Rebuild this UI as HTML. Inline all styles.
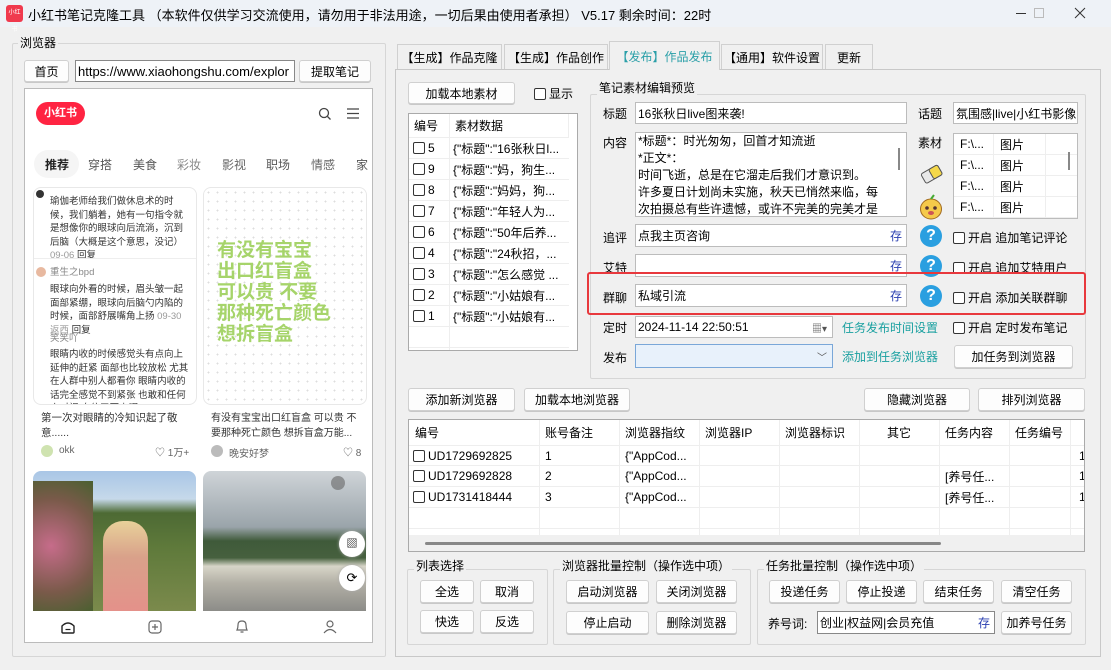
<!DOCTYPE html>
<html><head><meta charset="utf-8">
<style>
*{box-sizing:border-box;margin:0;padding:0}
body{width:1111px;height:670px;overflow:hidden;background:#f0f0f0;font-family:"Liberation Sans","Noto Sans CJK SC",sans-serif;font-size:12px;color:#000;position:relative}
.a{position:absolute}
.btn{position:absolute;background:#fdfdfd;border:1px solid #d0d0d0;border-radius:3px;text-align:center;font-size:12px;display:flex;align-items:center;justify-content:center;box-shadow:0 1px 0 #c8c8c8}
.inp{position:absolute;background:#fff;border:1px solid #bcbcbc;padding-left:2px;display:flex;align-items:center;font-size:12px;white-space:nowrap;overflow:hidden}
.grp{position:absolute;border:1px solid #d6d6d6;border-radius:2px}
.glab{position:absolute;background:#f0f0f0;padding:0 2px;font-size:12px;line-height:14px}
.cb{display:inline-block;width:12px;height:12px;border:1px solid #333;border-radius:2px;background:#fff;vertical-align:-2px;margin-right:3px}
.lbl{position:absolute;font-size:12px}
.q{position:absolute;width:22px;height:22px;border-radius:50%;background:#2a9fe0;color:#fff;font-weight:bold;font-size:16px;text-align:center;line-height:22px;font-family:"Liberation Sans",sans-serif}
.cun{position:absolute;right:4px;color:#2a3fb0;font-size:12px}
.tab{position:absolute;top:44px;height:25px;border:1px solid #d0d0d0;border-bottom:none;background:#f0f0f0;display:flex;align-items:center;justify-content:center;font-size:12px}
.row{position:absolute;left:0;right:0;height:21px;border-bottom:1px solid #eee;display:flex;align-items:center;font-size:12px;white-space:nowrap}
.link{position:absolute;color:#1aa0a0;font-size:12px}
.cm{position:absolute;left:16px;width:142px;font-size:9.5px;line-height:13.5px;color:#333}
</style></head><body>
<!-- title bar -->
<div class="a" style="left:0;top:0;width:1111px;height:27px;background:#eef2f7"></div>
<div class="a" style="left:6px;top:5px;width:17px;height:17px;border-radius:3px;background:#f03a4e;color:#fff;font-size:6px;line-height:17px;text-align:center">小红书</div>
<div class="a" style="left:28px;top:5px;font-size:13px;white-space:nowrap">小红书笔记克隆工具 （本软件仅供学习交流使用，请勿用于非法用途，一切后果由使用者承担） V5.17 剩余时间：22时</div>
<svg class="a" style="left:1015px;top:6px" width="80" height="16"><path d="M1 7.5h10" stroke="#333" stroke-width="1"/><rect x="19.5" y="2.5" width="9" height="9" fill="none" stroke="#bbb"/><path d="M60 2l10 10M70 2l-10 10" stroke="#333" stroke-width="1"/></svg>

<!-- left browser group -->
<div class="grp" style="left:12px;top:43px;width:374px;height:614px"></div>
<div class="glab" style="left:18px;top:36px">浏览器</div>
<div class="btn" style="left:24px;top:60px;width:45px;height:22px">首页</div>
<div class="inp" style="left:75px;top:60px;width:220px;height:22px;font-size:13px;border-color:#888">https://www.xiaohongshu.com/explor</div>
<div class="btn" style="left:299px;top:60px;width:72px;height:22px">提取笔记</div>
<div class="a" style="left:24px;top:88px;width:349px;height:555px;background:#fff;border:1px solid #bbb;overflow:hidden">
  <div class="a" style="left:11px;top:13px;width:49px;height:23px;border-radius:12px;background:#ff2442;color:#fff;font-weight:bold;font-size:11px;text-align:center;line-height:23px">小红书</div>
  <svg class="a" style="left:293px;top:18px" width="14" height="14" viewBox="0 0 14 14"><circle cx="6" cy="6" r="4.5" fill="none" stroke="#444" stroke-width="1.3"/><path d="M9.5 9.5 L12.5 12.5" stroke="#444" stroke-width="1.3"/></svg>
  <svg class="a" style="left:322px;top:19px" width="12" height="11"><path d="M0 1h12M0 5.5h12M0 10h12" stroke="#444" stroke-width="1.3"/></svg>
  <div class="a" style="left:9px;top:61px;width:45px;height:28px;border-radius:14px;background:#f5f5f5"></div>
  <div class="a" style="left:20px;top:67px;font-size:12px;font-weight:bold;color:#222">推荐</div>
  <div class="a" style="left:63px;top:67px;font-size:12px;color:#555">穿搭</div>
  <div class="a" style="left:108px;top:67px;font-size:12px;color:#555">美食</div>
  <div class="a" style="left:152px;top:67px;font-size:12px;color:#888">彩妆</div>
  <div class="a" style="left:197px;top:67px;font-size:12px;color:#666">影视</div>
  <div class="a" style="left:241px;top:67px;font-size:12px;color:#555">职场</div>
  <div class="a" style="left:286px;top:67px;font-size:12px;color:#666">情感</div>
  <div class="a" style="left:331px;top:67px;font-size:12px;color:#555">家</div>
  <!-- left card -->
  <div class="a" style="left:8px;top:98px;width:164px;height:218px;border:1px solid #e8e8e8;border-radius:8px;overflow:hidden">
    <div class="a" style="left:2px;top:2px;width:8px;height:8px;border-radius:50%;background:#333"></div>
    <div class="cm" style="top:7px">瑜伽老师给我们做休息术的时候，我们躺着，她有一句指令就是想像你的眼球向后流淌，沉到后脑（大概是这个意思，没记）<span style="color:#999">09-06</span> 回复</div>
    <div class="a" style="left:0;top:70px;width:164px;border-top:1px solid #eee"></div>
    <div class="a" style="left:2px;top:79px;width:10px;height:10px;border-radius:50%;background:#e8b9a0"></div>
    <div class="cm" style="top:78px;color:#888">重生之bpd</div>
    <div class="cm" style="top:95px">眼球向外看的时候，眉头皱一起面部紧绷，眼球向后脑勺内陷的时候，面部舒展嘴角上扬 <span style="color:#999">09-30 返西</span> 回复</div>
    <div class="cm" style="top:144px;color:#888">笑笑吖</div>
    <div class="cm" style="top:160px">眼睛内收的时候感觉头有点向上延伸的赶紧 面部也比较放松 尤其在人群中别人都看你 眼睛内收的话完全感觉不到紧张 也敢和任何人对视 自信了不少呢</div>
  </div>
  <div class="a" style="left:16px;top:322px;width:150px;font-size:10.5px;line-height:15px;color:#333">第一次对眼睛的冷知识起了敬意......</div>
  <div class="a" style="left:16px;top:356px;width:12px;height:12px;border-radius:50%;background:#cfe3b0"></div>
  <div class="a" style="left:34px;top:356px;font-size:10px;color:#666">okk</div>
  <div class="a" style="left:130px;top:355px;font-size:10px;color:#666">♡ 1万+</div>
  <!-- right card -->
  <div class="a" style="left:178px;top:98px;width:164px;height:218px;border:1px solid #e8e8e8;border-radius:8px;background-color:#fff;background-image:radial-gradient(#ddd 0.8px,transparent 0.9px);background-size:9px 9px">
    <div class="a" style="left:13px;top:52px;font-weight:bold;font-size:19px;line-height:21px;color:#a6d46a;width:150px">有没有宝宝<br>出口红盲盒<br>可以贵 不要<br>那种死亡颜色<br>想拆盲盒</div>
  </div>
  <div class="a" style="left:186px;top:322px;width:160px;font-size:10px;line-height:15px;color:#333;white-space:nowrap">有没有宝宝出口红盲盒 可以贵 不<br>要那种死亡颜色 想拆盲盒万能...</div>
  <div class="a" style="left:186px;top:356px;width:12px;height:12px;border-radius:50%;background:#bbb"></div>
  <div class="a" style="left:204px;top:356px;font-size:10px;color:#666">晚安好梦</div>
  <div class="a" style="left:318px;top:355px;font-size:10px;color:#666">♡ 8</div>
  <!-- images -->
  <div class="a" style="left:8px;top:382px;width:163px;height:140px;border-radius:8px 8px 0 0;overflow:hidden;background:linear-gradient(180deg,#a9c6e6 0%,#c6d9ea 20%,#4d6a34 30%,#5f7a3b 55%,#7b8a4c 100%)">
    <div class="a" style="left:0;top:10px;width:60px;height:130px;background:radial-gradient(circle at 30% 50%,#c66c8a,#7a5a4a 60%,#4a6030)"></div>
    <div class="a" style="left:70px;top:50px;width:45px;height:90px;border-radius:20px 20px 0 0;background:linear-gradient(180deg,#e8d19a,#d9a18a 40%,#e4918a)"></div>
  </div>
  <div class="a" style="left:178px;top:382px;width:163px;height:140px;border-radius:8px 8px 0 0;overflow:hidden;background:linear-gradient(180deg,#cfd4d8 0%,#9aa4aa 40%,#3f5a3a 50%,#46603e 62%,#d7d5c8 68%,#b3b0a6 80%,#8c8c88 100%)">
    <div class="a" style="left:128px;top:5px;width:14px;height:14px;border-radius:50%;background:#666;opacity:.6"></div>
  </div>
  <div class="a" style="left:314px;top:442px;width:26px;height:26px;border-radius:50%;background:#fff;box-shadow:0 0 3px #aaa;text-align:center;line-height:26px;font-size:11px">▨</div>
  <div class="a" style="left:314px;top:476px;width:26px;height:26px;border-radius:50%;background:#fff;box-shadow:0 0 3px #aaa;text-align:center;line-height:26px;font-size:13px">⟳</div>
  <!-- nav -->
  <svg class="a" style="left:36px;top:531px" width="14" height="14"><path d="M1 6 Q7 0 13 6 V12 Q13 13 12 13 H2 Q1 13 1 12Z" fill="none" stroke="#222" stroke-width="1.4"/><path d="M4.5 9.5h5" stroke="#222" stroke-width="1.2"/></svg>
  <svg class="a" style="left:123px;top:531px" width="14" height="14"><rect x="1" y="1" width="12" height="12" rx="3" fill="none" stroke="#666" stroke-width="1.2"/><path d="M7 4v6M4 7h6" stroke="#666" stroke-width="1.2"/></svg>
  <svg class="a" style="left:210px;top:530px" width="14" height="15"><path d="M2 11 Q3 9 3 6 Q3 2 7 2 Q11 2 11 6 Q11 9 12 11Z M5.5 13h3" fill="none" stroke="#666" stroke-width="1.2"/></svg>
  <svg class="a" style="left:298px;top:530px" width="14" height="15"><circle cx="7" cy="5" r="3" fill="none" stroke="#666" stroke-width="1.2"/><path d="M1 14 Q7 7 13 14" fill="none" stroke="#666" stroke-width="1.2"/></svg>
</div>

<!-- right panel -->
<div class="a" style="left:395px;top:69px;width:706px;height:588px;border:1px solid #c8c8c8;background:#f0f0f0"></div>
<div class="tab" style="left:397px;width:105px">【生成】作品克隆</div>
<div class="tab" style="left:504px;width:104px">【生成】作品创作</div>
<div class="tab" style="left:609px;top:41px;height:29px;width:111px;background:#f0f0f0;color:#2a9fa8;z-index:2">【发布】作品发布</div>
<div class="tab" style="left:721px;width:102px">【通用】软件设置</div>
<div class="tab" style="left:825px;width:48px">更新</div>

<div class="btn" style="left:408px;top:82px;width:107px;height:22px">加载本地素材</div>
<div class="lbl" style="left:534px;top:85px"><span class="cb"></span>显示</div>
<!-- material table -->
<div class="a" style="left:408px;top:113px;width:170px;height:238px;background:#fff;border:1px solid #aaa;overflow:hidden">
  <div class="a" style="left:0;top:0;width:160px;height:24px;display:flex;align-items:center;border-bottom:1px solid #eee"><span style="width:40px;padding-left:5px">编号</span><span style="padding-left:6px">素材数据</span></div>
  <div class="a" style="left:40px;top:0;width:1px;height:238px;background:#eee"></div>
  <div class="a" style="left:159px;top:0;width:1px;height:24px;background:#eee"></div>
  <div class="a" style="left:0;top:24px;width:160px;height:214px">
    <div class="row" style="top:0"><span style="width:40px;padding-left:4px"><span class="cb"></span>5</span><span style="padding-left:4px">{"标题":"16张秋日l...</span></div>
    <div class="row" style="top:21px"><span style="width:40px;padding-left:4px"><span class="cb"></span>9</span><span style="padding-left:4px">{"标题":"妈，狗生...</span></div>
    <div class="row" style="top:42px"><span style="width:40px;padding-left:4px"><span class="cb"></span>8</span><span style="padding-left:4px">{"标题":"妈妈，狗...</span></div>
    <div class="row" style="top:63px"><span style="width:40px;padding-left:4px"><span class="cb"></span>7</span><span style="padding-left:4px">{"标题":"年轻人为...</span></div>
    <div class="row" style="top:84px"><span style="width:40px;padding-left:4px"><span class="cb"></span>6</span><span style="padding-left:4px">{"标题":"50年后养...</span></div>
    <div class="row" style="top:105px"><span style="width:40px;padding-left:4px"><span class="cb"></span>4</span><span style="padding-left:4px">{"标题":"24秋招，...</span></div>
    <div class="row" style="top:126px"><span style="width:40px;padding-left:4px"><span class="cb"></span>3</span><span style="padding-left:4px">{"标题":"怎么感觉 ...</span></div>
    <div class="row" style="top:147px"><span style="width:40px;padding-left:4px"><span class="cb"></span>2</span><span style="padding-left:4px">{"标题":"小姑娘有...</span></div>
    <div class="row" style="top:168px"><span style="width:40px;padding-left:4px"><span class="cb"></span>1</span><span style="padding-left:4px">{"标题":"小姑娘有...</span></div>
    <div class="row" style="top:189px"></div>
  </div>
</div>

<div class="grp" style="left:590px;top:94px;width:496px;height:285px"></div>
<div class="glab" style="left:597px;top:81px">笔记素材编辑预览</div>
<div class="lbl" style="left:603px;top:105px">标题</div>
<div class="inp" style="left:635px;top:102px;width:272px;height:22px">16张秋日live图来袭!</div>
<div class="lbl" style="left:918px;top:105px">话题</div>
<div class="inp" style="left:953px;top:102px;width:125px;height:22px">氛围感|live|小红书影像</div>
<div class="lbl" style="left:603px;top:134px">内容</div>
<div class="a" style="left:635px;top:132px;width:272px;height:85px;background:#fff;border:1px solid #bcbcbc;padding:0 0 0 2px;line-height:17px;font-size:12px;overflow:hidden;white-space:nowrap">*标题*：时光匆匆，回首才知流逝<br>*正文*：<br>时间飞逝，总是在它溜走后我们才意识到。<br>许多夏日计划尚未实施，秋天已悄然来临，每<br>次拍摄总有些许遗憾，或许不完美的完美才是</div>
<div class="a" style="left:898px;top:148px;width:2px;height:22px;background:#888"></div>
<div class="lbl" style="left:918px;top:134px">素材</div>
<div class="a" style="left:953px;top:133px;width:125px;height:86px;background:#fff;border:1px solid #bcbcbc;overflow:hidden">
  <div class="row" style="top:0"><span style="width:40px;padding-left:6px">F:\...</span><span style="padding-left:6px">图片</span></div>
  <div class="row" style="top:21px"><span style="width:40px;padding-left:6px">F:\...</span><span style="padding-left:6px">图片</span></div>
  <div class="row" style="top:42px"><span style="width:40px;padding-left:6px">F:\...</span><span style="padding-left:6px">图片</span></div>
  <div class="row" style="top:63px"><span style="width:40px;padding-left:6px">F:\...</span><span style="padding-left:6px">图片</span></div>
  <div class="a" style="left:39px;top:0;width:1px;height:86px;background:#eee"></div>
  <div class="a" style="left:91px;top:0;width:1px;height:86px;background:#eee"></div>
  <div class="a" style="left:114px;top:18px;width:2px;height:18px;background:#888"></div>
</div>
<svg class="a" style="left:919px;top:163px" width="25" height="22"><g transform="rotate(-30 12 11)"><rect x="3" y="6" width="19" height="11" rx="2" fill="#e8e8e8" stroke="#555"/><rect x="12" y="6" width="10" height="11" rx="2" fill="#f5d84a" stroke="#555"/></g></svg>
<svg class="a" style="left:919px;top:193px" width="25" height="27"><ellipse cx="12" cy="16" rx="10.5" ry="10" fill="#f5c94a" stroke="#a06a20"/><circle cx="8" cy="15" r="1.8" fill="#533"/><circle cx="16" cy="15" r="1.8" fill="#533"/><ellipse cx="12" cy="20" rx="3" ry="2" fill="#c55"/><path d="M12 6 l3 -4" stroke="#4a3" stroke-width="2"/></svg>

<div class="lbl" style="left:603px;top:229px">追评</div>
<div class="inp" style="left:635px;top:224px;width:272px;height:23px">点我主页咨询<span class="cun">存</span></div>
<div class="q" style="left:920px;top:225px">?</div>
<div class="lbl" style="left:953px;top:229px"><span class="cb"></span>开启 追加笔记评论</div>
<div class="lbl" style="left:603px;top:259px">艾特</div>
<div class="inp" style="left:635px;top:254px;width:272px;height:23px"><span class="cun">存</span></div>
<div class="q" style="left:920px;top:255px">?</div>
<div class="lbl" style="left:953px;top:259px"><span class="cb"></span>开启 追加艾特用户</div>
<div class="lbl" style="left:603px;top:289px">群聊</div>
<div class="inp" style="left:635px;top:284px;width:272px;height:23px">私域引流<span class="cun">存</span></div>
<div class="q" style="left:920px;top:285px">?</div>
<div class="lbl" style="left:953px;top:289px"><span class="cb"></span>开启 添加关联群聊</div>
<div class="a" style="left:587px;top:272px;width:499px;height:43px;border:2.5px solid #e8383d;border-radius:3px;z-index:5"></div>

<div class="lbl" style="left:603px;top:319px">定时</div>
<div class="inp" style="left:635px;top:316px;width:198px;height:22px">2024-11-14 22:50:51<span class="a" style="right:5px;top:3px;font-size:10px;color:#555">▦▾</span></div>
<div class="link" style="left:842px;top:319px">任务发布时间设置</div>
<div class="lbl" style="left:953px;top:319px"><span class="cb"></span>开启 定时发布笔记</div>
<div class="lbl" style="left:603px;top:349px">发布</div>
<div class="inp" style="left:635px;top:344px;width:198px;height:24px;background:#e8f1fb;border-color:#7aa7d8"><span class="a" style="right:5px;top:4px;font-size:10px;color:#555">﹀</span></div>
<div class="link" style="left:842px;top:348px">添加到任务浏览器</div>
<div class="btn" style="left:954px;top:345px;width:119px;height:23px">加任务到浏览器</div>

<!-- browser table -->
<div class="btn" style="left:408px;top:388px;width:107px;height:23px">添加新浏览器</div>
<div class="btn" style="left:524px;top:388px;width:106px;height:23px">加载本地浏览器</div>
<div class="btn" style="left:864px;top:388px;width:106px;height:23px">隐藏浏览器</div>
<div class="btn" style="left:978px;top:388px;width:107px;height:23px">排列浏览器</div>
<div class="a" style="left:408px;top:419px;width:677px;height:133px;background:#fff;border:1px solid #aaa;overflow:hidden">
  <div class="a" style="left:0;top:0;width:677px;height:25px;display:flex;align-items:center;white-space:nowrap">
    <span class="a" style="left:6px">编号</span><span class="a" style="left:136px">账号备注</span><span class="a" style="left:216px">浏览器指纹</span><span class="a" style="left:296px">浏览器IP</span><span class="a" style="left:376px">浏览器标识</span><span class="a" style="left:478px">其它</span><span class="a" style="left:536px">任务内容</span><span class="a" style="left:606px">任务编号</span>
  </div>
  <div class="a" style="left:130px;top:0;width:1px;height:124px;background:#eee"></div>
  <div class="a" style="left:210px;top:0;width:1px;height:124px;background:#eee"></div>
  <div class="a" style="left:290px;top:0;width:1px;height:124px;background:#eee"></div>
  <div class="a" style="left:370px;top:0;width:1px;height:124px;background:#eee"></div>
  <div class="a" style="left:450px;top:0;width:1px;height:124px;background:#eee"></div>
  <div class="a" style="left:530px;top:0;width:1px;height:124px;background:#eee"></div>
  <div class="a" style="left:600px;top:0;width:1px;height:124px;background:#eee"></div>
  <div class="a" style="left:661px;top:0;width:1px;height:124px;background:#eee"></div>
  <div class="row" style="top:25px;border-top:1px solid #eee"><span class="a" style="left:4px"><span class="cb"></span>UD1729692825</span><span class="a" style="left:136px">1</span><span class="a" style="left:216px">{"AppCod...</span><span class="a" style="left:670px">1</span></div>
  <div class="row" style="top:46px"><span class="a" style="left:4px"><span class="cb"></span>UD1729692828</span><span class="a" style="left:136px">2</span><span class="a" style="left:216px">{"AppCod...</span><span class="a" style="left:536px">[养号任...</span><span class="a" style="left:670px">1</span></div>
  <div class="row" style="top:67px"><span class="a" style="left:4px"><span class="cb"></span>UD1731418444</span><span class="a" style="left:136px">3</span><span class="a" style="left:216px">{"AppCod...</span><span class="a" style="left:536px">[养号任...</span><span class="a" style="left:670px">1</span></div>
  <div class="row" style="top:88px"></div>
  <div class="a" style="left:0;top:115px;width:677px;height:18px;background:#f0f0f0"></div>
  <div class="a" style="left:16px;top:122px;width:516px;height:3px;background:#888;border-radius:2px"></div>
</div>

<div class="grp" style="left:407px;top:569px;width:141px;height:76px"></div>
<div class="glab" style="left:414px;top:559px">列表选择</div>
<div class="btn" style="left:420px;top:580px;width:54px;height:23px">全选</div>
<div class="btn" style="left:480px;top:580px;width:54px;height:23px">取消</div>
<div class="btn" style="left:420px;top:610px;width:54px;height:23px">快选</div>
<div class="btn" style="left:480px;top:610px;width:54px;height:23px">反选</div>
<div class="grp" style="left:553px;top:569px;width:198px;height:76px"></div>
<div class="glab" style="left:560px;top:559px">浏览器批量控制（操作选中项）</div>
<div class="btn" style="left:566px;top:580px;width:83px;height:23px">启动浏览器</div>
<div class="btn" style="left:656px;top:580px;width:81px;height:23px">关闭浏览器</div>
<div class="btn" style="left:566px;top:611px;width:83px;height:23px">停止启动</div>
<div class="btn" style="left:656px;top:611px;width:81px;height:23px">删除浏览器</div>
<div class="grp" style="left:757px;top:569px;width:329px;height:76px"></div>
<div class="glab" style="left:764px;top:559px">任务批量控制（操作选中项）</div>
<div class="btn" style="left:769px;top:580px;width:71px;height:23px">投递任务</div>
<div class="btn" style="left:846px;top:580px;width:71px;height:23px">停止投递</div>
<div class="btn" style="left:923px;top:580px;width:71px;height:23px">结束任务</div>
<div class="btn" style="left:1001px;top:580px;width:71px;height:23px">清空任务</div>
<div class="lbl" style="left:768px;top:615px">养号词:</div>
<div class="inp" style="left:817px;top:611px;width:178px;height:23px;border-color:#888">创业|权益网|会员充值<span class="cun">存</span></div>
<div class="btn" style="left:1001px;top:611px;width:71px;height:23px">加养号任务</div>
</body></html>
